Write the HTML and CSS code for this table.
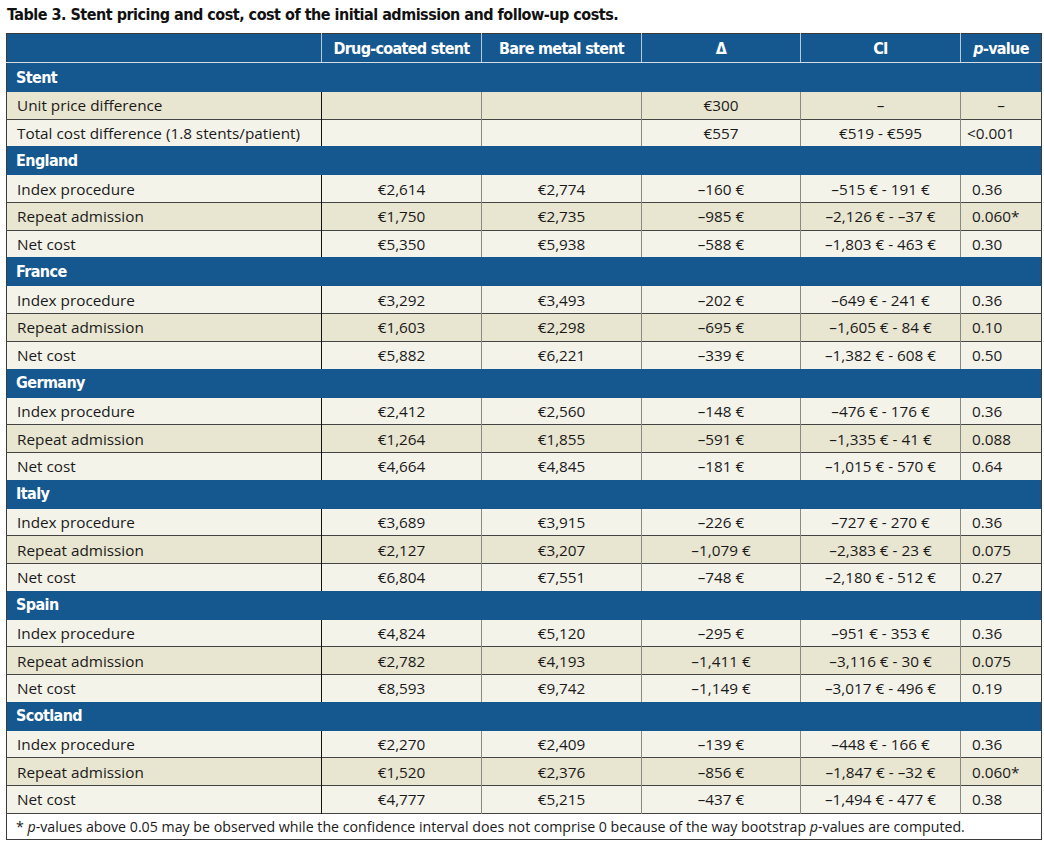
FILE: index.html
```html
<!DOCTYPE html>
<html>
<head>
<meta charset="utf-8">
<link rel="stylesheet" href="styles.css">
</head>
<body>
<h1 class="title">Table 3. Stent pricing and cost, cost of the initial admission and follow-up costs.</h1>
<table class="tbl">
  <colgroup>
    <col class="c1"><col class="c2"><col class="c3"><col class="c4"><col class="c5"><col class="c6">
  </colgroup>
  <thead>
    <tr class="head">
      <th></th><th>Drug-coated stent</th><th>Bare metal stent</th><th>Δ</th><th>CI</th><th><i>p</i>-value</th>
    </tr>
  </thead>
  <tbody>
    <tr class="group"><td colspan="6">Stent</td></tr>
    <tr class="dark"><td>Unit price difference</td><td></td><td></td><td>€300</td><td>–</td><td class="pc">–</td></tr>
    <tr class="light"><td>Total cost difference (1.8 stents/patient)</td><td></td><td></td><td>€557</td><td>€519 - €595</td><td class="pv lt">&lt;0.001</td></tr>

    <tr class="group"><td colspan="6">England</td></tr>
    <tr class="light"><td>Index procedure</td><td>€2,614</td><td>€2,774</td><td>–160 €</td><td>–515 € - 191 €</td><td class="pv">0.36</td></tr>
    <tr class="dark"><td>Repeat admission</td><td>€1,750</td><td>€2,735</td><td>–985 €</td><td>–2,126 € - –37 €</td><td class="pv">0.060*</td></tr>
    <tr class="light"><td>Net cost</td><td>€5,350</td><td>€5,938</td><td>–588 €</td><td>–1,803 € - 463 €</td><td class="pv">0.30</td></tr>

    <tr class="group"><td colspan="6">France</td></tr>
    <tr class="light"><td>Index procedure</td><td>€3,292</td><td>€3,493</td><td>–202 €</td><td>–649 € - 241 €</td><td class="pv">0.36</td></tr>
    <tr class="dark"><td>Repeat admission</td><td>€1,603</td><td>€2,298</td><td>–695 €</td><td>–1,605 € - 84 €</td><td class="pv">0.10</td></tr>
    <tr class="light"><td>Net cost</td><td>€5,882</td><td>€6,221</td><td>–339 €</td><td>–1,382 € - 608 €</td><td class="pv">0.50</td></tr>

    <tr class="group"><td colspan="6">Germany</td></tr>
    <tr class="light"><td>Index procedure</td><td>€2,412</td><td>€2,560</td><td>–148 €</td><td>–476 € - 176 €</td><td class="pv">0.36</td></tr>
    <tr class="dark"><td>Repeat admission</td><td>€1,264</td><td>€1,855</td><td>–591 €</td><td>–1,335 € - 41 €</td><td class="pv">0.088</td></tr>
    <tr class="light"><td>Net cost</td><td>€4,664</td><td>€4,845</td><td>–181 €</td><td>–1,015 € - 570 €</td><td class="pv">0.64</td></tr>

    <tr class="group"><td colspan="6">Italy</td></tr>
    <tr class="light"><td>Index procedure</td><td>€3,689</td><td>€3,915</td><td>–226 €</td><td>–727 € - 270 €</td><td class="pv">0.36</td></tr>
    <tr class="dark"><td>Repeat admission</td><td>€2,127</td><td>€3,207</td><td>–1,079 €</td><td>–2,383 € - 23 €</td><td class="pv">0.075</td></tr>
    <tr class="light"><td>Net cost</td><td>€6,804</td><td>€7,551</td><td>–748 €</td><td>–2,180 € - 512 €</td><td class="pv">0.27</td></tr>

    <tr class="group"><td colspan="6">Spain</td></tr>
    <tr class="light"><td>Index procedure</td><td>€4,824</td><td>€5,120</td><td>–295 €</td><td>–951 € - 353 €</td><td class="pv">0.36</td></tr>
    <tr class="dark"><td>Repeat admission</td><td>€2,782</td><td>€4,193</td><td>–1,411 €</td><td>–3,116 € - 30 €</td><td class="pv">0.075</td></tr>
    <tr class="light"><td>Net cost</td><td>€8,593</td><td>€9,742</td><td>–1,149 €</td><td>–3,017 € - 496 €</td><td class="pv">0.19</td></tr>

    <tr class="group"><td colspan="6">Scotland</td></tr>
    <tr class="light"><td>Index procedure</td><td>€2,270</td><td>€2,409</td><td>–139 €</td><td>–448 € - 166 €</td><td class="pv">0.36</td></tr>
    <tr class="dark"><td>Repeat admission</td><td>€1,520</td><td>€2,376</td><td>–856 €</td><td>–1,847 € - –32 €</td><td class="pv">0.060*</td></tr>
    <tr class="light"><td>Net cost</td><td>€4,777</td><td>€5,215</td><td>–437 €</td><td>–1,494 € - 477 €</td><td class="pv">0.38</td></tr>

    <tr class="foot"><td colspan="6">* <i>p</i>-values above 0.05 may be observed while the confidence interval does not comprise 0 because of the way bootstrap <i>p</i>-values are computed.</td></tr>
  </tbody>
</table>
</body>
</html>
```
FILE: styles.css
```css
html, body {
  margin: 0;
  padding: 0;
  background: #ffffff;
}
body {
  padding: 4px 4px 0 6px;
  font-family: "Open Sans", "Noto Sans", "Liberation Sans", sans-serif;
  color: #1a1a1a;
}
.title {
  margin: 0 0 8px 1px;
  font-family: "DejaVu Sans Condensed", "Liberation Sans", sans-serif;
  font-weight: bold;
  font-size: 16px;
  letter-spacing: -0.5px;
  line-height: 21px;
  color: #111;
}
.tbl {
  border-collapse: collapse;
  table-layout: fixed;
  width: 1035px;
  border: 1px solid #3a3a3a;
  font-size: 15.3px;
}
.c1 { width: 315px; }
.c2 { width: 160px; }
.c3 { width: 160px; }
.c4 { width: 159px; }
.c5 { width: 160px; }
.c6 { width: 81px; }

.head th {
  background: #15588f;
  color: #ffffff;
  font-family: "DejaVu Sans Condensed", "Liberation Sans", sans-serif;
  font-weight: bold;
  font-size: 16px;
  letter-spacing: -0.7px;
  height: 28px;
  padding: 0;
  text-align: center;
  border-left: 1px solid #b9c9da;
  border-bottom: 1px solid #d8dde3;
}
.head th:first-child { border-left: none; }
.head i { font-style: italic; }

.group td {
  background: #15588f;
  color: #ffffff;
  font-family: "DejaVu Sans Condensed", "Liberation Sans", sans-serif;
  font-weight: bold;
  font-size: 16px;
  letter-spacing: -0.6px;
  height: 28px;
  padding: 0 0 0 9px;
  text-align: left;
  border-bottom: 1px solid #15588f;
}

.dark td, .light td {
  height: 26.7px;
  padding: 0;
  text-align: center;
  border-top: 1px solid #444;
  border-left: 1px solid #8a8a85;
  color: #1a1a1a;
  line-height: 18px;
}
.dark td { background: #e8e5d0; }
.light td { background: #f4f3ea; }
.dark td:first-child, .light td:first-child {
  text-align: left;
  padding-left: 10px;
  border-left: none;
}
.dark td:nth-child(2), .light td:nth-child(2) {
  border-left: 1px solid #111;
}
.group + tr td { border-top: 1px solid #15588f; }
.dark td.pv, .light td.pv {
  text-align: left;
  padding-left: 11px;
}
.dark td.pv.lt, .light td.pv.lt { padding-left: 6px; }

.foot td {
  background: #ffffff;
  border-top: 1px solid #444;
  height: 25px;
  padding: 0 0 0 9px;
  font-size: 14.2px;
  color: #1a1a1a;
}
```
